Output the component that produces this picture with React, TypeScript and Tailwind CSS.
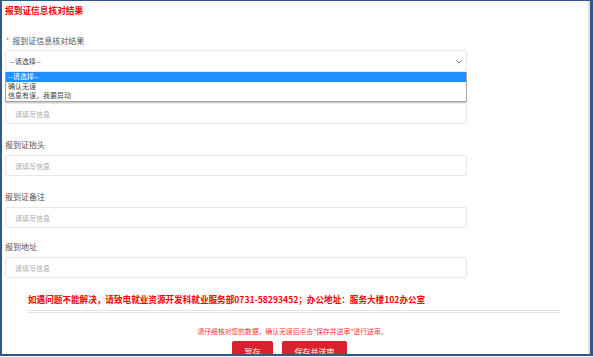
import { useState } from "react"

const font = { fontFamily: '"Noto Sans CJK SC", "Liberation Sans", sans-serif' }

const options = ["--请选择--", "确认无误", "信息有误，我要异动"]

function Field({ label, last }: { label?: string; last?: boolean }) {
  return (
    <div>
      <div
        className={
          last
            ? "h-[29px] pt-[9px] text-[8px] leading-[19px] text-[#555]"
            : "h-[31px] pt-[11px] text-[8px] leading-[19px] text-[#555]"
        }
      >
        {label}
      </div>
      <input
        className="block h-[21px] w-full rounded-[2px] border border-[#e8e8e8] bg-white px-[9px] text-[7px] text-[#333] outline-none placeholder:text-[#aaa]"
        placeholder="请填写信息"
      />
    </div>
  )
}

export default function App() {
  const [value, setValue] = useState(0)

  return (
    <div className="h-[357px] w-[593px] overflow-hidden bg-white" style={font}>
      <div className="h-[356px] overflow-hidden border-t border-r-[3px] border-b-2 border-l-2 border-[#34578a]">
        <div className="h-full border-r-2 border-[#e4e4e4] px-[3px]">
          <div className="h-[20px] text-[8.7px] font-bold leading-[20px] text-[#ff0000]">
            报到证信息核对结果
          </div>

          <div className="w-[462px]">
            <div className="mt-[10px] flex h-[19px] items-center text-[8px] leading-[19px] text-[#555]">
              <span className="ml-[1px] mr-[3px] text-[7px] text-[#ff3b3b]">*</span>
              报到证信息核对结果
            </div>

            <div className="relative">
              <div className="flex h-[22px] items-center justify-between rounded-[2px] border border-[#e8e8e8] pl-[4px] pr-[4px] text-[7px] text-[#444]">
                <span>{options[value]}</span>
                <svg width="6" height="4" viewBox="0 0 6 4" className="mt-[1px]">
                  <path d="M0.5 0.5 L3 3 L5.5 0.5" fill="none" stroke="#777" strokeWidth="1" />
                </svg>
              </div>
              {/* 展开的下拉列表 */}
              <ul className="absolute left-0 top-full z-10 w-full border border-t-0 border-[#a3a3a3] bg-white text-[7px] leading-[9.5px] text-[#444] shadow-[0_1px_0_#cfcfcf]">
                {options.map((o, i) => (
                  <li
                    key={o}
                    onClick={() => setValue(i)}
                    className={
                      i === value
                        ? "bg-[#1e90ff] pl-[2px] text-white"
                        : "pl-[2px]"
                    }
                  >
                    {o}
                  </li>
                ))}
              </ul>
            </div>

            <Field />
            <Field label="报到证抬头" />
            <Field label="报到证备注" />
            <Field label="报到地址" last />
          </div>

          <div className="ml-[23px] w-[532px] border-b-[3px] border-double border-[#e2e2e2] pb-[4px]">
            <div className="mt-[14px] h-[14px] whitespace-nowrap text-[8.6px] font-bold leading-[14px] text-[#ff0000]">
              如遇问题不能解决，请致电就业资源开发科就业服务部0731-58293452；办公地址：服务大楼102办公室
            </div>
          </div>

          <div className="mt-[12px] pr-[5px] text-center text-[6.8px] leading-[12px] text-[#ff3333]">
            请仔细核对您的数据，确认无误后点击"保存并送审"进行送审。
          </div>

          <div className="mt-[4px] flex justify-center gap-[9px] pr-[11px]">
            <button className="h-[22px] w-[41px] rounded-[2px] bg-[#d9222d] text-[8px] text-white">
              暂存
            </button>
            <button className="h-[22px] w-[65px] rounded-[2px] bg-[#d9222d] text-[8px] text-white">
              保存并送审
            </button>
          </div>
        </div>
      </div>
    </div>
  )
}
